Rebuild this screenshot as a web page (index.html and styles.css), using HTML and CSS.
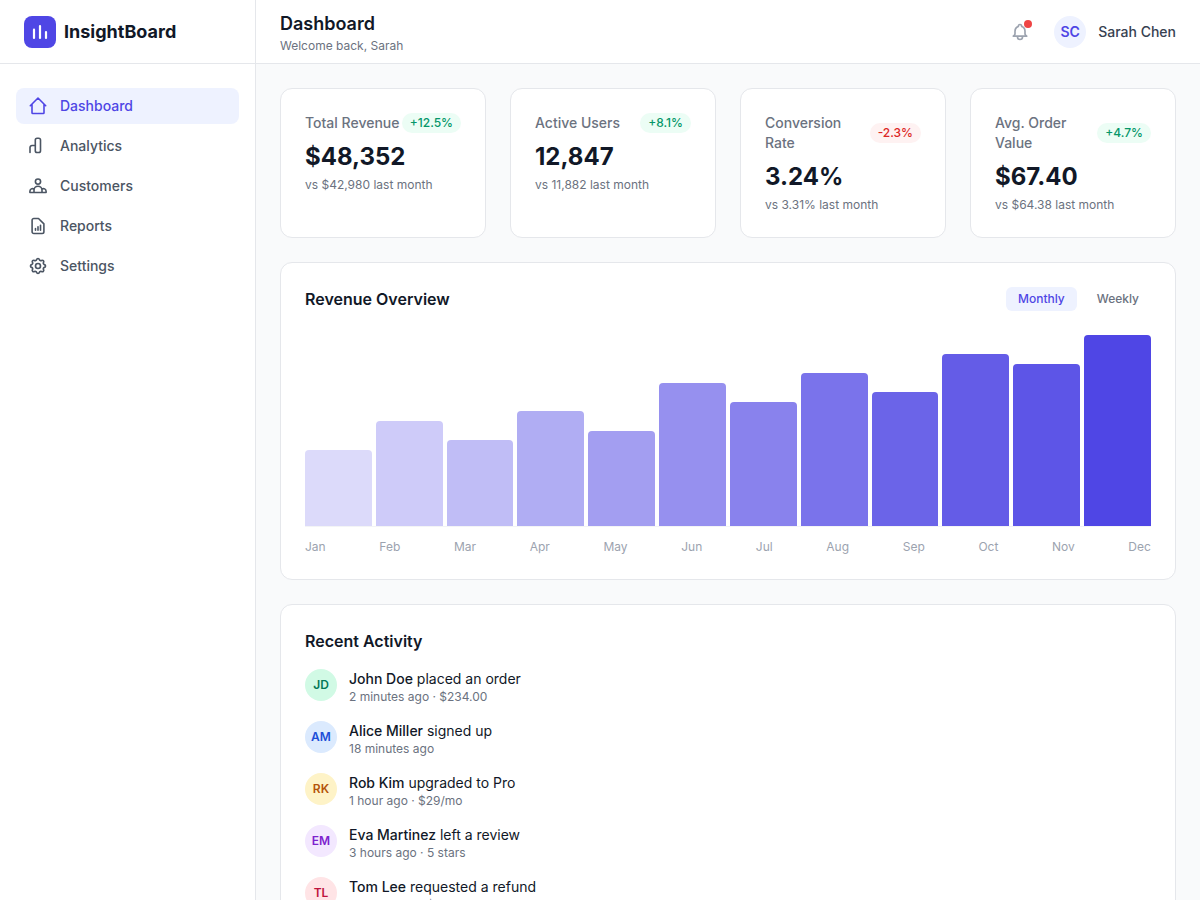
FILE: index.html
```html
<!DOCTYPE html>
<html lang="en">
<head>
    <meta charset="UTF-8">
    <meta name="viewport" content="width=device-width, initial-scale=1.0">
    <title>InsightBoard</title>
    <link rel="stylesheet" href="styles.css">
</head>
<body>
    <div class="app">
        <aside class="sidebar">
            <div class="brand">
                <span class="brand-logo">
                    <svg width="20" height="20" viewBox="0 0 20 20" fill="none" stroke="currentColor" stroke-width="2.2" stroke-linecap="round">
                        <path d="M4 7.7V16M10 4v12M16 10v6"/>
                    </svg>
                </span>
                <span class="brand-name">InsightBoard</span>
            </div>
            <nav class="nav">
                <a href="#" class="nav-item active">
                    <svg class="icon" viewBox="0 0 20 20">
                        <path d="M2.3 9.7L10 2l7.700 7.700M4 8.500v8.300a.7.7 0 0 0 .7.7h4M16 8.500v8.300a.7.7 0 0 1-.7.7H9.500"/>
                    </svg>
                    Dashboard
                </a>
                <a href="#" class="nav-item">
                    <svg class="icon" viewBox="0 0 20 20">
                        <path d="M2 16.500v-5a2 2 0 0 1 2-2h3.300"/>
                        <rect x="7.300" y="2.300" width="5.200" height="14.200" rx="1.800"/>
                    </svg>
                    Analytics
                </a>
                <a href="#" class="nav-item">
                    <svg class="icon" viewBox="0 0 20 20">
                        <circle cx="10" cy="5.600" r="2.600"/>
                        <path d="M6 16.500v-2.300a4 4 0 0 1 8 0v2.300M1.900 16.500v-1.300a2.600 2.600 0 0 1 4.100-2.100M18.100 16.500v-1.300a2.600 2.600 0 0 0-4.100-2.100M1.900 16.500h16.200"/>
                    </svg>
                    Customers
                </a>
                <a href="#" class="nav-item">
                    <svg class="icon" viewBox="0 0 20 20">
                        <path d="M7.500 14.200v-1.700M10 14.200v-3.400M12.500 14.200V9.200M14.200 17.500H5.800a1.700 1.700 0 0 1-1.700-1.700V4.200a1.700 1.700 0 0 1 1.700-1.700h4.700l5.400 5.400v7.900a1.700 1.700 0 0 1-1.700 1.700z"/>
                    </svg>
                    Reports
                </a>
                <a href="#" class="nav-item">
                    <svg class="icon icon-24" viewBox="0 0 24 24">
                        <path d="M10.325 4.317c.426-1.756 2.924-1.756 3.350 0a1.724 1.724 0 0 0 2.573 1.066c1.543-.940 3.310.826 2.370 2.370a1.724 1.724 0 0 0 1.065 2.572c1.756.426 1.756 2.924 0 3.350a1.724 1.724 0 0 0-1.066 2.573c.940 1.543-.826 3.310-2.370 2.370a1.724 1.724 0 0 0-2.572 1.065c-.426 1.756-2.924 1.756-3.350 0a1.724 1.724 0 0 0-2.573-1.066c-1.543.940-3.310-.826-2.370-2.370a1.724 1.724 0 0 0-1.065-2.572c-1.756-.426-1.756-2.924 0-3.350a1.724 1.724 0 0 0 1.066-2.573c-.940-1.543.826-3.310 2.370-2.370.996.608 2.296.070 2.572-1.065z"/>
                        <circle cx="12" cy="12" r="3"/>
                    </svg>
                    Settings
                </a>
            </nav>
        </aside>

        <div class="content">
            <header class="topbar">
                <div>
                    <h1 class="page-title">Dashboard</h1>
                    <p class="page-subtitle">Welcome back, Sarah</p>
                </div>
                <div class="topbar-right">
                    <button type="button" class="bell" aria-label="Notifications">
                        <svg class="icon icon-24" viewBox="0 0 24 24">
                            <path d="M15 17h5l-1.405-1.405A2.032 2.032 0 0 1 18 14.158V11a6 6 0 0 0-4-5.659V5a2 2 0 1 0-4 0v.341C7.670 6.165 6 8.388 6 11v3.159c0 .538-.214 1.055-.595 1.436L4 17h5m6 0v1a3 3 0 1 1-6 0v-1m6 0H9"/>
                        </svg>
                        <span class="bell-dot"></span>
                    </button>
                    <div class="user">
                        <span class="avatar avatar-user">SC</span>
                        <span>Sarah Chen</span>
                    </div>
                </div>
            </header>

            <main class="main">
                <section class="stats">
                    <div class="card">
                        <div class="stat-top">
                            <span class="stat-label">Total Revenue</span>
                            <span class="badge up">+12.5%</span>
                        </div>
                        <p class="stat-value">$48,352</p>
                        <p class="stat-note">vs $42,980 last month</p>
                    </div>
                    <div class="card">
                        <div class="stat-top">
                            <span class="stat-label">Active Users</span>
                            <span class="badge up">+8.1%</span>
                        </div>
                        <p class="stat-value">12,847</p>
                        <p class="stat-note">vs 11,882 last month</p>
                    </div>
                    <div class="card">
                        <div class="stat-top">
                            <span class="stat-label">Conversion Rate</span>
                            <span class="badge down">-2.3%</span>
                        </div>
                        <p class="stat-value">3.24%</p>
                        <p class="stat-note">vs 3.31% last month</p>
                    </div>
                    <div class="card">
                        <div class="stat-top">
                            <span class="stat-label">Avg. Order Value</span>
                            <span class="badge up">+4.7%</span>
                        </div>
                        <p class="stat-value">$67.40</p>
                        <p class="stat-note">vs $64.38 last month</p>
                    </div>
                </section>

                <section class="card">
                    <div class="chart-header">
                        <h2 class="card-title">Revenue Overview</h2>
                        <div class="tabs">
                            <button type="button" class="tab active">Monthly</button>
                            <button type="button" class="tab">Weekly</button>
                        </div>
                    </div>
                    <div class="chart">
                        <div class="bar" style="height: 40%; background-color: #dcdafa"></div>
                        <div class="bar" style="height: 55%; background-color: #cecbf9"></div>
                        <div class="bar" style="height: 45%; background-color: #c0bdf6"></div>
                        <div class="bar" style="height: 60%; background-color: #b0adf3"></div>
                        <div class="bar" style="height: 50%; background-color: #a39ef1"></div>
                        <div class="bar" style="height: 75%; background-color: #9690ef"></div>
                        <div class="bar" style="height: 65%; background-color: #8982ed"></div>
                        <div class="bar" style="height: 80%; background-color: #7a73eb"></div>
                        <div class="bar" style="height: 70%; background-color: #6b64e8"></div>
                        <div class="bar" style="height: 90%; background-color: #645ce7"></div>
                        <div class="bar" style="height: 85%; background-color: #5d55e7"></div>
                        <div class="bar" style="height: 100%; background-color: #4f46e5"></div>
                    </div>
                    <div class="chart-labels">
                        <span>Jan</span>
                        <span>Feb</span>
                        <span>Mar</span>
                        <span>Apr</span>
                        <span>May</span>
                        <span>Jun</span>
                        <span>Jul</span>
                        <span>Aug</span>
                        <span>Sep</span>
                        <span>Oct</span>
                        <span>Nov</span>
                        <span>Dec</span>
                    </div>
                </section>

                <section class="card">
                    <h2 class="card-title">Recent Activity</h2>
                    <ul class="activity">
                        <li class="activity-item">
                            <span class="avatar avatar-green">JD</span>
                            <div>
                                <p class="activity-text"><strong>John Doe</strong> placed an order</p>
                                <p class="activity-meta">2 minutes ago · $234.00</p>
                            </div>
                        </li>
                        <li class="activity-item">
                            <span class="avatar avatar-blue">AM</span>
                            <div>
                                <p class="activity-text"><strong>Alice Miller</strong> signed up</p>
                                <p class="activity-meta">18 minutes ago</p>
                            </div>
                        </li>
                        <li class="activity-item">
                            <span class="avatar avatar-yellow">RK</span>
                            <div>
                                <p class="activity-text"><strong>Rob Kim</strong> upgraded to Pro</p>
                                <p class="activity-meta">1 hour ago · $29/mo</p>
                            </div>
                        </li>
                        <li class="activity-item">
                            <span class="avatar avatar-purple">EM</span>
                            <div>
                                <p class="activity-text"><strong>Eva Martinez</strong> left a review</p>
                                <p class="activity-meta">3 hours ago · 5 stars</p>
                            </div>
                        </li>
                        <li class="activity-item">
                            <span class="avatar avatar-red">TL</span>
                            <div>
                                <p class="activity-text"><strong>Tom Lee</strong> requested a refund</p>
                                <p class="activity-meta">5 hours ago · $89.00</p>
                            </div>
                        </li>
                    </ul>
                </section>
            </main>
        </div>
    </div>
</body>
</html>
```
FILE: styles.css
```css
* {
    box-sizing: border-box;
}
body {
    margin: 0;
    font-family: Inter, sans-serif;
    font-size: 14px;
    line-height: 20px;
    color: #111827;
    background-color: #f9fafb;
}
h1, h2, p, ul {
    margin: 0;
    padding: 0;
}
button {
    border: none;
    background: none;
    font-family: inherit;
    cursor: pointer;
}
.app {
    display: flex;
    height: 100vh;
}

/* sidebar */
.sidebar {
    width: 256px;
    flex-shrink: 0;
    background-color: #fff;
    border-right: 1px solid #e5e7eb;
}
.brand {
    display: flex;
    align-items: center;
    gap: 8px;
    height: 64px;
    padding: 0 24px;
    border-bottom: 1px solid #e5e7eb;
}
.brand-logo {
    display: flex;
    align-items: center;
    justify-content: center;
    width: 32px;
    height: 32px;
    border-radius: 8px;
    background-color: #4f46e5;
    color: #fff;
}
.brand-name {
    font-size: 18px;
    line-height: 28px;
    font-weight: 700;
}
.nav {
    display: flex;
    flex-direction: column;
    gap: 4px;
    padding: 24px 16px;
}
.nav-item {
    display: flex;
    align-items: center;
    gap: 12px;
    padding: 8px 12px;
    border-radius: 8px;
    font-weight: 500;
    color: #4b5563;
    text-decoration: none;
}
.nav-item.active {
    background-color: #eef2ff;
    color: #4f46e5;
}
.icon {
    display: block;
    width: 20px;
    height: 20px;
    fill: none;
    stroke: currentColor;
    stroke-width: 1.6;
    stroke-linecap: round;
    stroke-linejoin: round;
}
.icon-24 {
    stroke-width: 2;
}

/* top bar */
.content {
    display: flex;
    flex-direction: column;
    flex: 1;
    min-width: 0;
}
.topbar {
    display: flex;
    align-items: center;
    justify-content: space-between;
    flex-shrink: 0;
    height: 64px;
    padding: 0 24px;
    background-color: #fff;
    border-bottom: 1px solid #e5e7eb;
}
.page-title {
    font-size: 18px;
    line-height: 28px;
    font-weight: 600;
}
.page-subtitle {
    font-size: 12px;
    line-height: 16px;
    color: #6b7280;
}
.topbar-right {
    display: flex;
    align-items: center;
    gap: 16px;
}
.bell {
    position: relative;
    padding: 8px;
    color: #9ca3af;
}
.bell-dot {
    position: absolute;
    top: 6px;
    right: 6px;
    width: 8px;
    height: 8px;
    border-radius: 50%;
    background-color: #ef4444;
}
.user {
    display: flex;
    align-items: center;
    gap: 12px;
    font-weight: 500;
    color: #374151;
}
.avatar {
    display: flex;
    align-items: center;
    justify-content: center;
    flex-shrink: 0;
    width: 32px;
    height: 32px;
    border-radius: 50%;
    font-size: 12px;
    font-weight: 600;
}
.avatar-user {
    font-size: 14px;
    background-color: #eef2ff;
    color: #4f46e5;
}
.avatar-green {
    background-color: #d1fae5;
    color: #047857;
}
.avatar-blue {
    background-color: #dbeafe;
    color: #1d4ed8;
}
.avatar-yellow {
    background-color: #fef3c7;
    color: #b45309;
}
.avatar-purple {
    background-color: #f3e8ff;
    color: #7e22ce;
}
.avatar-red {
    background-color: #ffe4e6;
    color: #be123c;
}

/* main */
.main {
    display: flex;
    flex-direction: column;
    gap: 24px;
    flex: 1;
    min-height: 0;
    padding: 24px;
    overflow-y: auto;
}
.card {
    flex-shrink: 0;
    padding: 24px;
    background-color: #fff;
    border: 1px solid #e5e7eb;
    border-radius: 12px;
}
.card-title {
    font-size: 16px;
    line-height: 24px;
    font-weight: 600;
}
.stats {
    display: grid;
    grid-template-columns: repeat(4, 1fr);
    gap: 24px;
}
.stat-top {
    display: flex;
    align-items: center;
    justify-content: space-between;
    margin-bottom: 8px;
}
.stat-label {
    font-weight: 500;
    color: #6b7280;
}
.badge {
    padding: 2px 8px;
    border-radius: 10px;
    font-size: 12px;
    line-height: 16px;
    font-weight: 500;
}
.badge.up {
    background-color: #ecfdf5;
    color: #059669;
}
.badge.down {
    background-color: #fef2f2;
    color: #dc2626;
}
.stat-value {
    font-size: 24px;
    line-height: 32px;
    font-weight: 700;
}
.stat-note {
    margin-top: 4px;
    font-size: 12px;
    line-height: 16px;
    color: #6b7280;
}

/* chart */
.chart-header {
    display: flex;
    align-items: center;
    justify-content: space-between;
    margin-bottom: 24px;
}
.tabs {
    display: flex;
    gap: 8px;
}
.tab {
    padding: 4px 12px;
    border-radius: 6px;
    font-size: 12px;
    line-height: 16px;
    font-weight: 500;
    color: #6b7280;
}
.tab.active {
    background-color: #eef2ff;
    color: #4f46e5;
}
.chart {
    display: flex;
    align-items: flex-end;
    gap: 4px;
    height: 192px;
    border-bottom: 1px solid #f3f4f6;
}
.bar {
    flex: 1;
    border-radius: 4px 4px 0 0;
}
.chart-labels {
    display: flex;
    justify-content: space-between;
    margin-top: 12px;
    font-size: 12px;
    line-height: 16px;
    color: #9ca3af;
}

/* activity */
.activity {
    display: flex;
    flex-direction: column;
    gap: 16px;
    margin-top: 16px;
    list-style: none;
}
.activity-item {
    display: flex;
    align-items: flex-start;
    gap: 12px;
}
.activity-text strong {
    font-weight: 500;
}
.activity-meta {
    font-size: 12px;
    line-height: 16px;
    color: #6b7280;
}
```
